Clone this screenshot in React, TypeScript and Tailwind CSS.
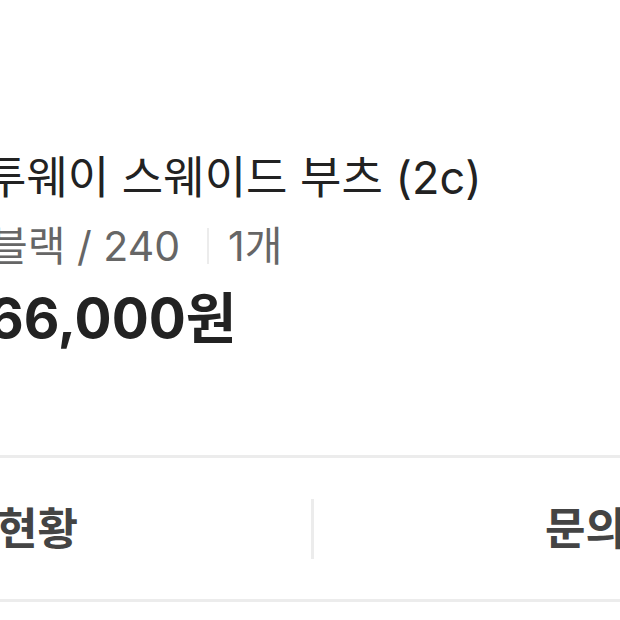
export default function App() {
  const font = { fontFamily: 'Inter, "Noto Sans CJK KR", sans-serif' };

  return (
    <div className="w-[620px] h-[620px] overflow-hidden bg-white" style={font}>
      <div className="pt-[152px]">
        {/* 상품명 */}
        <div className="ml-[-15px] whitespace-nowrap text-[45px] leading-[52px] text-[#222]">
          투웨이 스웨이드 부츠 (2c)
        </div>

        {/* 옵션 / 수량 */}
        <div className="mt-[16px] ml-[-10px] flex items-center whitespace-nowrap text-[41px] leading-[52px] text-[#666]">
          <span>블랙 / 240</span>
          <span className="ml-[27px] mr-[19px] h-[36px] w-[2px] bg-[#ececec]" />
          <span>1개</span>
        </div>

        {/* 가격 */}
        <div className="mt-[16px] ml-[-12px] whitespace-nowrap text-[55px] font-bold leading-[60px] text-[#222]">
          66,000원
        </div>
      </div>

      {/* 하단 탭 */}
      <div className="mt-[107px] border-y-[3px] border-[#ececec] flex h-[147px] items-center">
        <div className="w-[314px] shrink-0 whitespace-nowrap text-[44px] font-bold text-[#444] -ml-[3px]">
          현황
        </div>
        <div className="h-[60px] w-[3px] shrink-0 bg-[#ececec]" />
        <div className="min-w-0 flex-1 whitespace-nowrap pl-[231px] text-[44px] font-bold text-[#444]">
          문의
        </div>
      </div>
    </div>
  );
}
